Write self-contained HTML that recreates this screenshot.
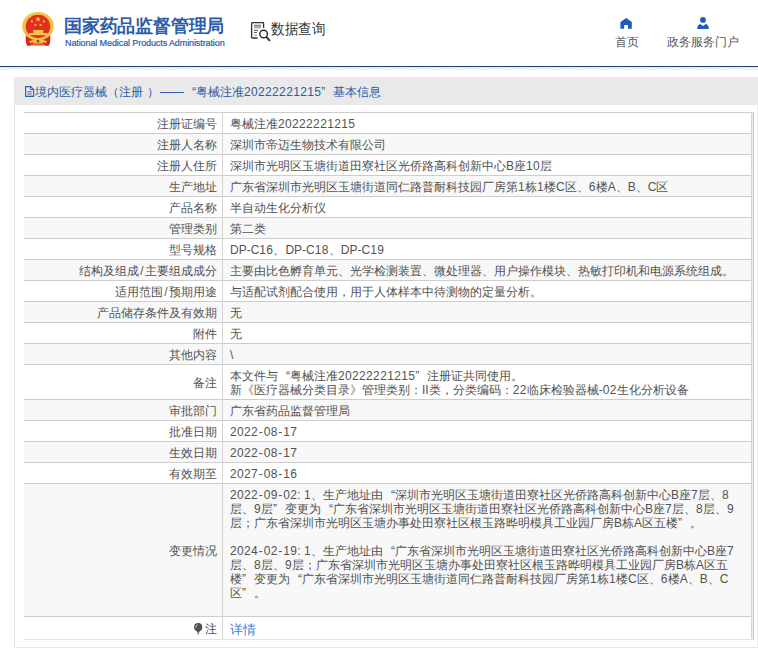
<!DOCTYPE html>
<html><head><meta charset="utf-8">
<style>
html,body{margin:0;padding:0;background:#fff;}
body{width:758px;height:652px;overflow:hidden;position:relative;font-family:"Liberation Sans",sans-serif;color:#525252;font-size:12px;}
.abs{position:absolute;}
#title{left:64px;top:14px;font-size:18px;font-weight:bold;color:#2d5cab;white-space:nowrap;line-height:24px;letter-spacing:-0.2px;}
#sub{left:65px;top:37.6px;font-size:9px;color:#2d5aa4;white-space:nowrap;line-height:11px;letter-spacing:-0.1px;-webkit-text-stroke:0.2px #2d5aa4;}
#sjcx{left:271px;top:20px;font-size:14.5px;color:#333;line-height:18px;white-space:nowrap;transform:scaleX(0.9);transform-origin:0 0;}
.nav{font-size:12px;color:#555;line-height:14px;white-space:nowrap;}
#topline{left:0;top:66px;width:758px;height:1px;background:#1b4473;}
#hatch{left:0;top:67px;width:758px;height:3px;}
#panel{left:14px;top:77px;width:760px;height:571px;border:1px solid #e6e6e6;border-top:0;border-right:0;box-sizing:border-box;}
#bar{left:14px;top:77px;width:744px;height:28px;background:#e9e9e9;}
#bartext{left:35px;top:85px;color:#2c5ca6;line-height:14px;white-space:nowrap;}
#tbl{left:24px;top:112px;border-collapse:collapse;table-layout:fixed;width:728px;}
#tbl td{border-top:1px solid #cdcdcd;padding:4px 0 2px;line-height:14px;vertical-align:middle;white-space:nowrap;}
#tbl td.l{width:193px;text-align:right;padding-right:5px;border-right:1px solid #d4d4d4;}
#tbl td.v{padding-left:7px;border-right:1px solid #d4d4d4;}
#tbl tr.g td{background:#f8f8f8;}
b.d{font-weight:normal;letter-spacing:0.35px;}
i.h{font-style:normal;margin:0 0.6px;}
i.sl{font-style:normal;margin:0 1.4px;}
i.rp{font-style:normal;display:inline-block;width:17px;text-indent:4px;}
i.ql,i.qr{font-style:normal;display:inline-block;width:12px;}i.ql{text-align:right}i.qr{text-align:left}
#rb1{left:752px;top:113px;width:1px;height:527px;background:#ececec;}
#rb2{left:753px;top:112px;width:1px;height:528px;background:#c8c8c8;}
#tline{left:24px;top:112px;width:730px;height:1px;background:#cdcdcd;}
#bline{left:24px;top:639px;width:728px;height:1px;background:#e3e3e3;}
#pr{left:757px;top:105px;width:1px;height:542px;background:#efefef;}
</style></head><body>
<!-- emblem -->
<svg class="abs" style="left:20px;top:10px" width="36" height="38" viewBox="0 0 36 38">
  <path d="M6.2 24 Q4.6 31 7.2 35.8 L28.8 35.8 Q31.4 31 29.8 24 Z" fill="#d9261c"/>
  <ellipse cx="18" cy="16.2" rx="15.8" ry="14.3" fill="#f3c24a"/>
  <ellipse cx="18" cy="16.4" rx="12.3" ry="11.6" fill="#e2301f"/>
  <rect x="13.2" y="20" width="10" height="3.2" fill="#f1c84e"/>
  <rect x="9" y="23" width="18.4" height="2.2" fill="#f1c84e"/>
  <path d="M18 6.4 L18.7 8.3 L20.7 8.3 L19.1 9.5 L19.7 11.4 L18 10.2 L16.3 11.4 L16.9 9.5 L15.3 8.3 L17.3 8.3Z" fill="#f6d04a"/>
  <circle cx="11.9" cy="11.4" r="1.1" fill="#f1bf45"/>
  <circle cx="23.9" cy="11.4" r="1.1" fill="#f1bf45"/>
  <circle cx="15.4" cy="14.9" r="1.1" fill="#f1bf45"/>
  <circle cx="20.5" cy="14.9" r="1.1" fill="#f1bf45"/>
  <path d="M9 31 Q18 28.5 27 31 L26 33 Q18 31 10 33Z" fill="#f3c24a"/>
  <path d="M14.5 29 L21.5 29 L23 33.5 L13 33.5 Z" fill="#f3c24a"/>
  <path d="M11 34.6 H25 V35.8 H11Z" fill="#f1c060"/>
  <circle cx="18" cy="31.2" r="1.4" fill="#d9261c"/>
</svg>
<div id="title" class="abs">国家药品监督管理局</div>
<div id="sub" class="abs">National Medical Products Administration</div>
<!-- data query icon -->
<svg class="abs" style="left:250px;top:21px" width="22" height="22" viewBox="0 0 22 22">
  <path d="M7.6 17 H2.4 Q1.6 17 1.6 16.2 V2.4 Q1.6 1.6 2.4 1.6 H12.8 Q13.6 1.6 13.6 2.4 V7" fill="none" stroke="#333" stroke-width="1.3"/>
  <rect x="4" y="3.8" width="7" height="0.9" fill="#555"/>
  <rect x="4" y="5" width="7" height="2.4" fill="#aaa"/>
  <rect x="4" y="8.9" width="4" height="1" fill="#555"/>
  <rect x="4" y="11" width="3" height="1" fill="#666"/>
  <rect x="4" y="13.6" width="3" height="1" fill="#999"/>
  <circle cx="13.6" cy="13" r="3.8" fill="#fff" stroke="#2b2b2b" stroke-width="1.4"/>
  <path d="M16.3 15.9 L19.9 19.8" stroke="#2b2b2b" stroke-width="1.9"/>
</svg>
<div id="sjcx" class="abs">数据查询</div>
<!-- nav -->
<svg class="abs" style="left:620px;top:17px" width="13" height="13" viewBox="0 0 13 13">
  <path d="M6.2 1 L11.8 5.1 V11.8 H8 V7.9 H4.1 V11.8 H0.4 V5.1 Z" fill="#1c5cc0"/>
</svg>
<div class="abs nav" style="left:615px;top:35px">首页</div>
<svg class="abs" style="left:697px;top:16px" width="13" height="14" viewBox="0 0 13 14">
  <circle cx="6" cy="3.9" r="2.9" fill="#1c5cc0"/>
  <path d="M0.2 13 Q0.4 8.6 3.3 8 L6 9.9 L8.7 8 Q11.6 8.6 11.9 13 Z" fill="#1c5cc0"/>
</svg>
<div class="abs nav" style="left:667px;top:35px">政务服务门户</div>

<div id="topline" class="abs"></div>
<svg id="hatch" class="abs" width="758" height="3"><defs><pattern id="hp" width="3" height="3" patternUnits="userSpaceOnUse"><rect x="0" y="0" width="3" height="1" fill="#d4eefa"/><rect x="2" y="1" width="1" height="1" fill="#cad8ec"/><rect x="1" y="2" width="1" height="1" fill="#dde2ea"/></pattern></defs><rect width="758" height="3" fill="url(#hp)"/></svg>
<div id="panel" class="abs"></div>
<div id="bar" class="abs"></div>
<svg class="abs" style="left:25px;top:86px" width="10" height="11" viewBox="0 0 10 11">
  <path d="M0.6 0.6 H5.8 L8.6 3.4 V10.4 H0.6 Z" fill="none" stroke="#2c5ca6" stroke-width="1.1"/>
  <path d="M5.6 0.8 V3.6 H8.4" fill="none" stroke="#2c5ca6" stroke-width="0.9"/>
  <path d="M2.3 5.8 H6.8 M2.3 8 H6.8" stroke="#2c5ca6" stroke-width="0.9"/>
</svg>
<div id="bartext" class="abs">境内医疗器械（注册<i class="rp">）</i>——<i class="ql">“</i>粤械注准<b class="d">20222221215</b><i class="qr">”</i>基本信息</div>

<table id="tbl" class="abs">
<tr><td class="l">注册证编号</td><td class="v">粤械注准<b class="d">20222221215</b></td></tr>
<tr class="g"><td class="l">注册人名称</td><td class="v">深圳市帝迈生物技术有限公司</td></tr>
<tr><td class="l">注册人住所</td><td class="v">深圳市光明区玉塘街道田寮社区光侨路高科创新中心B座<b class="d">10</b>层</td></tr>
<tr class="g"><td class="l">生产地址</td><td class="v">广东省深圳市光明区玉塘街道同仁路普耐科技园厂房第<b class="d">1</b>栋<b class="d">1</b>楼C区、<b class="d">6</b>楼A、B、C区</td></tr>
<tr><td class="l">产品名称</td><td class="v">半自动生化分析仪</td></tr>
<tr class="g"><td class="l">管理类别</td><td class="v">第二类</td></tr>
<tr><td class="l">型号规格</td><td class="v">DP-C<b class="d">16</b>、DP-C<b class="d">18</b>、DP-C<b class="d">19</b></td></tr>
<tr class="g"><td class="l">结构及组成<i class="sl">/</i>主要组成成分</td><td class="v">主要由比色孵育单元、光学检测装置、微处理器、用户操作模块、热敏打印机和电源系统组成。</td></tr>
<tr><td class="l">适用范围<i class="sl">/</i>预期用途</td><td class="v">与适配试剂配合使用，用于人体样本中待测物的定量分析。</td></tr>
<tr class="g"><td class="l">产品储存条件及有效期</td><td class="v">无</td></tr>
<tr><td class="l">附件</td><td class="v">无</td></tr>
<tr class="g"><td class="l">其他内容</td><td class="v">\</td></tr>
<tr><td class="l">备注</td><td class="v">本文件与<i class="ql">“</i>粤械注准<b class="d">20222221215</b><i class="qr">”</i>注册证共同使用。<br>新《医疗器械分类目录》管理类别：II类，分类编码：<b class="d">22</b>临床检验器械-<b class="d">02</b>生化分析设备</td></tr>
<tr class="g"><td class="l">审批部门</td><td class="v">广东省药品监督管理局</td></tr>
<tr><td class="l">批准日期</td><td class="v"><b class="d">2022<i class="h">-</i>08<i class="h">-</i>17</b></td></tr>
<tr class="g"><td class="l">生效日期</td><td class="v"><b class="d">2022<i class="h">-</i>08<i class="h">-</i>17</b></td></tr>
<tr><td class="l">有效期至</td><td class="v"><b class="d">2027<i class="h">-</i>08<i class="h">-</i>16</b></td></tr>
<tr class="g"><td class="l">变更情况</td><td class="v"><b class="d">2022<i class="h">-</i>09<i class="h">-</i>02</b>: <b class="d">1</b>、生产地址由<i class="ql">“</i>深圳市光明区玉塘街道田寮社区光侨路高科创新中心B座<b class="d">7</b>层、<b class="d">8</b><br>层、<b class="d">9</b>层<i class="qr">”</i>变更为<i class="ql">“</i>广东省深圳市光明区玉塘街道田寮社区光侨路高科创新中心B座<b class="d">7</b>层、<b class="d">8</b>层、<b class="d">9</b><br>层；广东省深圳市光明区玉塘办事处田寮社区根玉路晔明模具工业园厂房B栋A区五楼<i class="qr">”</i>。<br><br><b class="d">2024<i class="h">-</i>02<i class="h">-</i>19</b>: <b class="d">1</b>、生产地址由<i class="ql">“</i>广东省深圳市光明区玉塘街道田寮社区光侨路高科创新中心B座<b class="d">7</b><br>层、<b class="d">8</b>层、<b class="d">9</b>层；广东省深圳市光明区玉塘办事处田寮社区根玉路晔明模具工业园厂房B栋A区五<br>楼<i class="qr">”</i>变更为<i class="ql">“</i>广东省深圳市光明区玉塘街道同仁路普耐科技园厂房第<b class="d">1</b>栋<b class="d">1</b>楼C区、<b class="d">6</b>楼A、B、C<br>区<i class="qr">”</i>。<br>&nbsp;</td></tr>
<tr><td class="l" style="height:16px"><svg width="9" height="12" viewBox="0 0 9 12" style="vertical-align:-2px;margin-right:2px"><circle cx="4.2" cy="4.2" r="4.1" fill="#505058"/><path d="M2.2 7.4 L6.2 7.4 L4.6 10 L3.8 10Z" fill="#505058"/><rect x="3.3" y="10.4" width="1.8" height="1" fill="#666"/><path d="M1.8 4.6 A2.6 2.6 0 0 1 4 1.7" fill="none" stroke="#d8d8dc" stroke-width="0.8"/></svg>注</td><td class="v" style="color:#4a80d8;font-size:13px"><span style="position:relative;top:1px">详情</span></td></tr>
</table>
<div id="rb1" class="abs"></div><div id="rb2" class="abs"></div><div id="tline" class="abs"></div><div id="bline" class="abs"></div><div id="pr" class="abs"></div>
</body></html>
